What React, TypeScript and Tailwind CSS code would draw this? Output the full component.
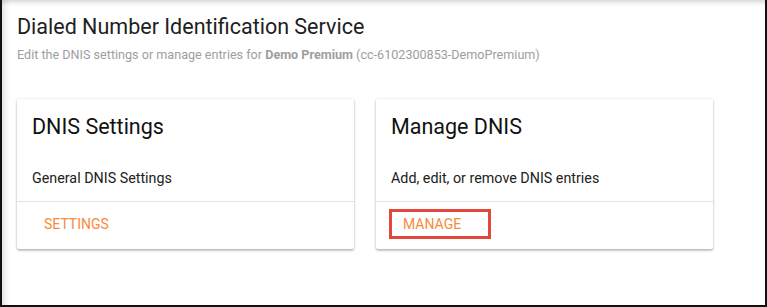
const cards = [
  {
    title: 'DNIS Settings',
    text: 'General DNIS Settings',
    action: 'SETTINGS',
    highlight: false,
  },
  {
    title: 'Manage DNIS',
    text: 'Add, edit, or remove DNIS entries',
    action: 'MANAGE',
    highlight: true,
  },
];

const App = () => {
  return (
    <div
      className="w-[767px] h-[307px] bg-white border-l-2 border-r-2 border-b-2 border-[#111] shadow-[inset_0_6px_5px_-4px_rgba(0,0,0,0.18),inset_9px_0_7px_-7px_rgba(0,0,0,0.14)] overflow-hidden"
      style={{ fontFamily: 'Roboto, "Open Sans", sans-serif' }}
    >
      <div className="pl-[15px] pt-[13px]">
        <h1 className="text-[21.5px] leading-[28px] text-[#212121]">
          Dialed Number Identification Service
        </h1>
        <p className="mt-[6px] text-[12.6px] leading-[16px] text-[#9e9e9e]">
          Edit the DNIS settings or manage entries for{' '}
          <span className="font-bold">Demo Premium</span> (cc-6102300853-DemoPremium)
        </p>

        <div className="flex gap-[22px] mt-[36px]">
          {cards.map((card) => (
            <div
              key={card.title}
              className="w-[337px] h-[150px] bg-white rounded-[2px] shadow-[0_1px_3px_rgba(0,0,0,0.2),0_2px_2px_rgba(0,0,0,0.12),0_0_2px_rgba(0,0,0,0.1)] flex flex-col"
            >
              <div className="px-[15px] pt-[12px]">
                <h2 className="text-[21.5px] leading-[32px] text-[#111]">{card.title}</h2>
                <p className="mt-[25px] text-[14.3px] leading-[20px] text-[#212121]">
                  {card.text}
                </p>
              </div>
              <div className="mt-[13px] border-t border-[#e3e3e3] pl-[13px] pt-[7px]">
                <span
                  className={
                    card.highlight
                      ? 'inline-flex items-center h-[30px] w-[102px] border-[3px] border-[#e5473d] pl-[11px] text-[14px] leading-[20px] text-[#f98a3c]'
                      : 'inline-flex items-center h-[30px] w-[102px] border-[3px] border-transparent pl-[11px] text-[14px] leading-[20px] text-[#f98a3c]'
                  }
                >
                  {card.action}
                </span>
              </div>
            </div>
          ))}
        </div>
      </div>
    </div>
  );
};

export default App;
